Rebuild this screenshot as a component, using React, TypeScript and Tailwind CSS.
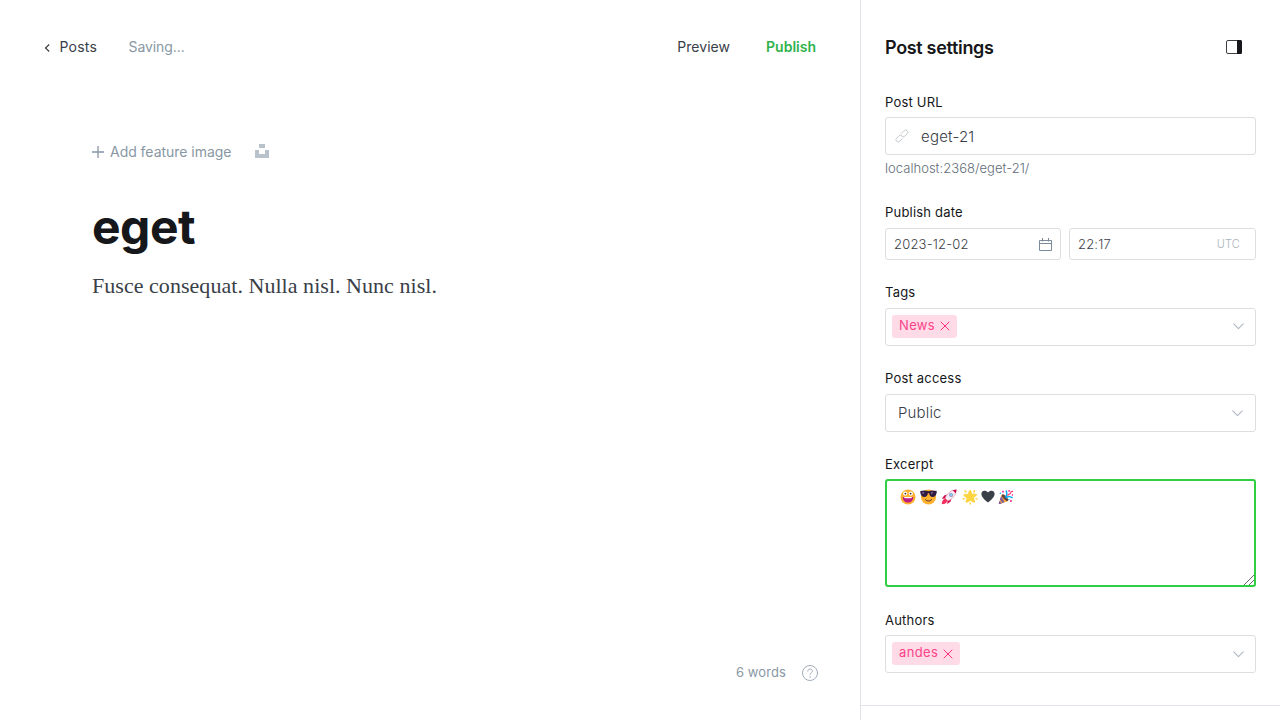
import React from "react";

const label = "block h-4 text-[13px] leading-4 tracking-[0.2px] text-[#15171a]";
const field = "rounded-[3px] border border-[#dddedf] bg-white";

function Chevron() {
  return (
    <svg width="11" height="7" viewBox="0 0 11 7" fill="none" stroke="#aeb7c1" strokeWidth="1.1" strokeLinecap="round" strokeLinejoin="round">
      <path d="M.8.9 5.5 5.7 10.2.9" />
    </svg>
  );
}

function Token({ text, width, offset }: { text: string; width: string; offset: string }) {
  return (
    <span className={`flex h-[23px] items-center justify-between rounded-[3px] bg-[#ffdbe8] pl-[7px] pr-[7px] text-[13px] leading-[20px] tracking-[0.35px] text-[#fb4488] ${width}`}>
      <span className="-mt-[3px]">{text}</span>
      <svg className={offset} width="10" height="10" viewBox="0 0 10 10" fill="none" stroke="#fb2d7d" strokeWidth="1" strokeLinecap="round">
        <path d="M1 1l8 8M9 1L1 9" />
      </svg>
    </span>
  );
}

function Grin() {
  return (
    <svg width="16" height="16" viewBox="0 0 16 16">
      <circle cx="8" cy="8" r="7.5" fill="#ffb02e" />
      <circle cx="5.2" cy="4.6" r="2.1" fill="#fff" />
      <circle cx="10.8" cy="4.6" r="2.1" fill="#fff" />
      <circle cx="5.4" cy="4.6" r=".9" fill="#402a32" />
      <circle cx="10.6" cy="4.6" r=".9" fill="#402a32" />
      <path d="M2.8 8h10.4c.2 3.5-2.1 5.5-5.2 5.5S2.6 11.5 2.8 8z" fill="#bb1d80" />
      <path d="M4.2 8h7.6v.5c0 .4-.3.7-.8.7H5c-.5 0-.8-.3-.8-.7z" fill="#fff" />
    </svg>
  );
}

function Shades() {
  return (
    <svg width="17" height="16" viewBox="0 0 17 16">
      <circle cx="8.5" cy="8" r="7.5" fill="#ffb02e" />
      <path d="M.3 2C3 1.2 6 1.3 8.5 2.2c2.500-.9 5.500-1 8.200-.2v1.500c-.6 3-1.800 4.500-4.100 4.500-2 0-3-1.200-3.500-3.800H7.900C7.400 6.800 6.400 8 4.400 8 2.100 8 .9 6.500.3 3.500z" fill="#321b41" />
      <path d="M2.300 3.200l2.200-.1-1.700 2.600zM11 3.200l2.200-.1-1.700 2.600z" fill="#8a70a0" />
      <path d="M5.500 10.700c1.600 1.800 4.400 1.800 6 0" fill="none" stroke="#402a32" strokeWidth="1" strokeLinecap="round" />
    </svg>
  );
}

function RocketEmoji() {
  return (
    <svg width="16" height="16" viewBox="0 0 16 16">
      <path d="M6.5 5.5 3.2 6.6.9 9.800l3.400-.2zM10.500 9.500 9.400 12.800 6.200 15.100l.4-3.600z" fill="#ca0b4a" />
      <path d="M.8 15.200c0-2.600.8-4.200 2.500-5.200l2.700 2.700c-1 1.700-2.600 2.500-5.200 2.500z" fill="#f92f60" />
      <path d="M12 1.200C8.300 2.600 5.200 5.800 3.700 9.900l2.400 2.400c4.200-1.500 7.300-4.600 8.700-8.300z" fill="#f3eef8" stroke="#dc7f9f" strokeWidth=".6" />
      <path d="M11.700 1.300C13 .7 14.300.5 15.600.4c0 1.300-.3 2.600-.9 3.900z" fill="#ca0b4a" />
      <circle cx="10" cy="6" r="1.700" fill="#83cbff" stroke="#998ea4" strokeWidth=".7" />
      <path d="M4 8.900 2.900 10.800l2.300 2.300 1.900-1.100z" fill="#f92f60" />
    </svg>
  );
}

function StarEmoji() {
  return (
    <svg width="16" height="16" viewBox="0 0 16 16">
      <path d="M8.800 1.800l1.300 3.400 3.700-.1c.8 0 1.200 1 .5 1.500l-2.900 2.200 1.400 3.400c.3.800-.5 1.500-1.300 1L8.300 11.400l-3.100 1.900c-.8.400-1.500-.2-1.200-1L5 8.900 2.100 6.700c-.7-.5-.3-1.500.5-1.400l3.500.1 1.100-3.500c.3-.9 1.300-.9 1.600-.1z" fill="#fcd53f" stroke="#fccb35" strokeWidth=".6" />
      <g stroke="#fcd53f" strokeWidth="1.500" strokeLinecap="round">
        <path d="M3 1.900l.9 1.100M12.600 1.700l-.8 1.300M1.200 9.900l1-.4M14.100 9.600l.8.3M8.300 14.100v.9" />
      </g>
    </svg>
  );
}

function HeartEmoji() {
  return (
    <svg width="14" height="16" viewBox="0 0 14 16">
      <path d="M7 13.600C3.600 10.800.4 8 .4 5 .4 1.300 4.800.6 7 3.500 9.200.6 13.600 1.300 13.600 5c0 3-3.200 5.800-6.600 8.600z" fill="#394047" />
    </svg>
  );
}

function PartyEmoji() {
  return (
    <svg width="16" height="16" viewBox="0 0 16 16">
      <path d="M3.800 5.500.8 14c-.2.800.3 1.400 1.100 1.100l8.300-3z" fill="#f9a93c" />
      <path d="M3.200 7l3.200 6.200-1.800.7-2.700-3.500zM1.500 12l2.300 2.400-1.800.6c-.9.300-1.400-.2-1.200-1z" fill="#7d5ba6" />
      <ellipse cx="7" cy="8.700" rx="1.700" ry="4.300" transform="rotate(-43 7 8.700)" fill="#6b4238" />
      <path d="M7.500 7.800c2-2 1.500-3.900.7-5.700M8.200 8.800c1.800-1.900 3.800-1.300 6-.2" fill="none" stroke="#00a6ed" strokeWidth="1.400" strokeLinecap="round" />
      <path d="M9.800 6.400c.2-2 2.600-.6 2.800-2.600.1-1.400 1.200-1.500 2-1.500" fill="none" stroke="#f3387a" strokeWidth="1.200" strokeLinecap="round" />
      <g fill="#f70a8d">
        <circle cx="5" cy="2.700" r=".9" /><circle cx="11.100" cy="1.800" r=".9" /><circle cx="14.400" cy="6" r=".8" /><circle cx="12.900" cy="12" r=".9" />
      </g>
      <g fill="#00a6ed"><circle cx="2.300" cy="4.300" r=".7" /><circle cx="10.900" cy="10.600" r=".7" /></g>
    </svg>
  );
}

export default function App() {
  return (
    <div className="flex h-[720px] w-[1280px] overflow-hidden bg-white font-['Inter',sans-serif] text-[#394047]">
      <main className="flex w-[860px] shrink-0 flex-col">
        <header className="flex h-[94px] items-center pb-px pl-[44px] pr-[44px] text-[14px]">
          <svg width="6" height="8" viewBox="0 0 6 8" fill="none" stroke="#394047" strokeWidth="1.200" className="mt-[3px]">
            <path d="M5.200.5 1.500 4l3.700 3.500" />
          </svg>
          <span className="ml-[9.500px] w-[69px] tracking-[0.2px]">Posts</span>
          <span className="tracking-[-0.08px] text-[#8897a4]">Saving...</span>
          <span className="ml-auto mr-9 tracking-[0.05px]">Preview</span>
          <span className="font-semibold text-[#30b24a]">Publish</span>
        </header>
        <section className="flex-1 px-[92px] pt-[46px]">
          <div className="flex h-6 items-center text-[14px] text-[#8897a4]">
            <svg width="12" height="12" viewBox="0 0 12 12" fill="none" stroke="#8796a5" strokeWidth="1.300">
              <path d="M6 0v12M0 6h12" />
            </svg>
            <span className="-mt-px ml-1.5 w-[145px] tracking-[-0.03px]">Add feature image</span>
            <svg width="14" height="14" viewBox="0 0 14 14" fill="#b9c2ca" className="-mt-0.5">
              <path d="M4 0h6v4H4zM0 6h4v4h6V6h4v8H0z" />
            </svg>
          </div>
          <h1 className="mt-[34px] h-[58px] text-[48px] font-bold leading-[58px] tracking-[-0.5px] text-[#15171a]">eget</h1>
          <p className="mt-[14px] whitespace-nowrap font-['Georgia','Liberation_Serif',serif] text-[22px] leading-8 tracking-[0.04px]">Fusce consequat. Nulla nisl. Nunc nisl.</p>
        </section>
        <footer className="flex h-[94px] items-center justify-end pr-[42px] text-[13px] text-[#8897a4]">
          <span className="mr-4 tracking-[0.1px]">6 words</span>
          <svg width="16" height="16" viewBox="0 0 16 16" fill="none" stroke="#96a3b0" strokeWidth=".9">
            <circle cx="8" cy="8" r="7.500" />
            <path d="M5.700 6.500c0-1.500 1-2.500 2.400-2.500s2.300.8 2.300 2.100c0 1.600-2.300 1.900-2.300 3.600v.5" />
            <circle cx="8.100" cy="12" r=".3" fill="#96a3b0" />
          </svg>
        </footer>
      </main>
      <aside className="flex w-[420px] shrink-0 flex-col border-l border-[#e1e5ea]">
        <div className="flex h-[94px] items-center justify-between pl-6 pr-[38px]">
          <h2 className="text-[18px] font-semibold tracking-[-0.32px] text-[#15171a]">Post settings</h2>
          <svg width="16" height="14" viewBox="0 0 16 14">
            <rect x=".5" y=".5" width="15" height="13" rx="1.500" fill="none" stroke="#3c3e41" />
            <path d="M11 0H14.500q1.500 0 1.500 1.500v11q0 1.500-1.500 1.500H11z" fill="#15171a" />
          </svg>
        </div>
        <div className="flex flex-col px-6">
          <label className={label}>Post URL</label>
          <div className={`mt-[7px] flex h-[38px] items-center pl-[9px] text-[15px] font-light tracking-[0.2px] ${field}`}>
            <svg width="14" height="14" viewBox="0 0 14 14" fill="none" stroke="#bdc3c8" strokeWidth=".8">
              <g transform="rotate(-45 7 7)">
                <path d="M5.800 9.100H1.700a2.200 2.200 0 0 1-2.200-2.200 2.200 2.200 0 0 1 2.200-2.200h3.500a2.200 2.200 0 0 1 2.100 2.500M8.200 4.700h4.100a2.200 2.200 0 0 1 2.200 2.200 2.200 2.200 0 0 1-2.200 2.200H8.800a2.200 2.200 0 0 1-2.100-2.500" />
              </g>
            </svg>
            <span className="ml-3 pt-0.5">eget-21</span>
          </div>
          <p className="mt-[5px] h-4 text-[13px] font-light leading-4 tracking-[0.03px] text-[#626d79]">localhost:2368/eget-21/</p>

          <label className={`mt-[28px] ${label}`}>Publish date</label>
          <div className="mt-[8px] flex h-8 gap-2 text-[13px] font-light tracking-[0.2px]">
            <div className={`flex w-[176px] items-center justify-between px-2 ${field}`}>
              <span className="pt-0.5">2023-12-02</span>
              <svg width="13" height="13" viewBox="0 0 13 13" fill="none" stroke="#7c8b9a" strokeWidth="1">
                <path d="M.5 2.500h12v10H.5zM.5 5.500h12M3.500 0v3.500M9.500 0v3.500" />
              </svg>
            </div>
            <div className={`flex flex-1 items-center justify-between pl-2 pr-[15px] ${field}`}>
              <span className="pt-0.5">22:17</span>
              <span className="text-[11px] text-[#aab2ba]">UTC</span>
            </div>
          </div>

          <label className={`mt-[24px] ${label}`}>Tags</label>
          <div className={`mt-[8px] flex h-[38px] items-start justify-between pl-1.5 pr-[11px] pt-1.5 ${field}`}>
            <Token text="News" width="w-[65px]" offset="-mt-px" />
            <span className="mt-[8px]"><Chevron /></span>
          </div>

          <label className={`mt-[24px] ${label}`}>Post access</label>
          <div className={`mt-[8px] flex h-[38px] items-center justify-between pl-3 pr-[12px] text-[15px] font-light tracking-[0.15px] ${field}`}>
            <span>Public</span>
            <Chevron />
          </div>

          <label className={`mt-[24px] ${label}`}>Excerpt</label>
          <div className="mt-[7px] flex h-[108px] justify-between rounded-[3px] border-2 border-[#30cf43] pl-[13px]">
            <div className="flex pt-[8px]">
              <Grin />
              <span className="ml-1"><Shades /></span>
              <span className="ml-1"><RocketEmoji /></span>
              <span className="ml-[5px]"><StarEmoji /></span>
              <span className="ml-[3px]"><HeartEmoji /></span>
              <span className="ml-[3px]"><PartyEmoji /></span>
            </div>
            <svg className="self-end" width="10" height="10" viewBox="0 0 10 10" stroke="#55585b" strokeWidth=".9">
              <path d="M0 10 10 0M5 10l5-5" />
            </svg>
          </div>

          <label className={`mt-[25px] ${label}`}>Authors</label>
          <div className={`mt-[7px] flex h-[38px] items-start justify-between pl-1.5 pr-[11px] pt-1.5 ${field}`}>
            <Token text="andes" width="w-[68px]" offset="mt-px" />
            <span className="mt-[9px]"><Chevron /></span>
          </div>
        </div>
        <div className="mt-8 border-t border-[#e1e5ea]" />
      </aside>
    </div>
  );
}
